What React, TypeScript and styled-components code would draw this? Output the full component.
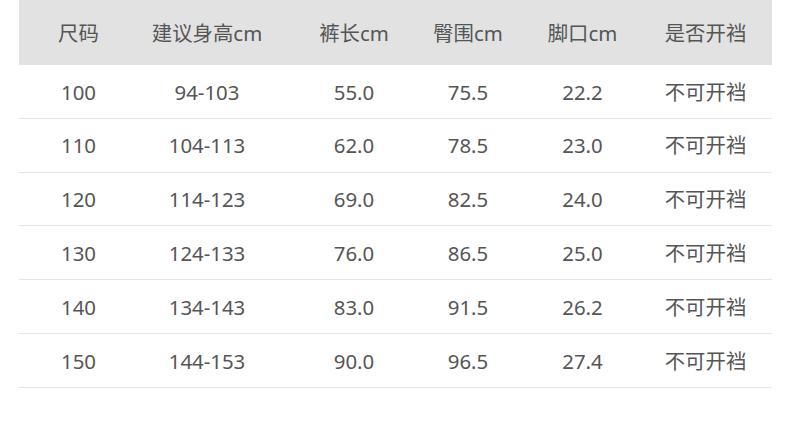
import React from "react";
import styled, { createGlobalStyle } from "styled-components";

const Global = createGlobalStyle`
  html, body { margin: 0; padding: 0; background: #ffffff; }
  body { font-family: "Noto Sans", "Noto Sans CJK SC", sans-serif; }
`;

const Page = styled.div`
  width: 790px;
  height: 431px;
  padding: 0 18px 0 19px;
  box-sizing: border-box;
  background: #ffffff;
`;

const Table = styled.div`
  width: 753px;
  display: flex;
  flex-direction: column;
`;

const Row = styled.div<{ $head?: boolean }>`
  display: grid;
  grid-template-columns: 119px 138px 156px 72px 157px 89px 1fr;
  align-items: center;
  height: ${(p) => (p.$head ? "65px" : "53.8px")};
  box-sizing: border-box;
  padding-top: 1px;
  background: ${(p) => (p.$head ? "#e2e2e2" : "#ffffff")};
  border-bottom: ${(p) => (p.$head ? "none" : "1px solid #e6e6e6")};
`;

const Cell = styled.div`
  text-align: center;
  white-space: nowrap;
  font-size: 20.4px;
  line-height: 1;
  color: #555555;
  font-family: "Noto Sans", "Noto Sans CJK SC", sans-serif;
`;

const headers = ["尺码", "建议身高cm", "裤长cm", "臀围cm", "脚口cm", "是否开裆"];
const rows = [
  ["100", "94-103", "55.0", "75.5", "22.2", "不可开裆"],
  ["110", "104-113", "62.0", "78.5", "23.0", "不可开裆"],
  ["120", "114-123", "69.0", "82.5", "24.0", "不可开裆"],
  ["130", "124-133", "76.0", "86.5", "25.0", "不可开裆"],
  ["140", "134-143", "83.0", "91.5", "26.2", "不可开裆"],
  ["150", "144-153", "90.0", "96.5", "27.4", "不可开裆"],
];

export default function App() {
  return (
    <>
      <Global />
      <Page>
        <Table>
          <Row $head>
            {headers.map((h) => (
              <Cell key={h}>{h}</Cell>
            ))}
            <span />
          </Row>
          {rows.map((r) => (
            <Row key={r[0]}>
              {r.map((c, i) => (
                <Cell key={i}>{c}</Cell>
              ))}
              <span />
            </Row>
          ))}
        </Table>
      </Page>
    </>
  );
}
